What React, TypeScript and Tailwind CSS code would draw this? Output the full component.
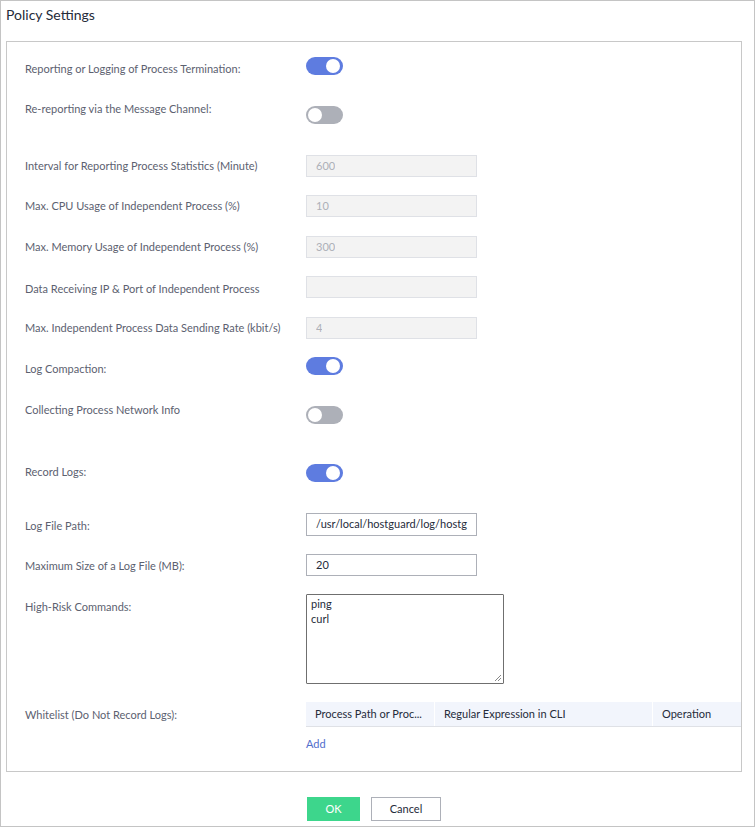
import React from "react";

const font = { fontFamily: "Lato, 'Liberation Sans', sans-serif" };

const Toggle = ({ on, className = "" }: { on: boolean; className?: string }) => (
  <div
    className={`relative h-[18px] w-[37px] rounded-full ${on ? "bg-[#5e7ce0]" : "bg-[#adb0b8]"} ${className}`}
  >
    <div
      className={`absolute top-[2px] h-[14px] w-[14px] rounded-full bg-white ${on ? "right-[3px]" : "left-[2px]"}`}
    />
  </div>
);

const Field = ({ value, disabled }: { value: string; disabled?: boolean }) => (
  <div
    className={`flex h-[22px] w-[171px] items-center border px-[9px] text-[11px] ${
      disabled
        ? "border-[#dfe1e6] bg-[#f3f3f3] text-[#adb0b8]"
        : "border-[#adb0b8] bg-white text-[#252b3a]"
    }`}
  >
    <span className="overflow-hidden whitespace-nowrap">{value}</span>
  </div>
);

const Label = ({ children, className = "" }: { children: React.ReactNode; className?: string }) => (
  <div className={`w-[281px] shrink-0 text-[11px] leading-[16px] text-[#5c6170] ${className}`}>{children}</div>
);

const App = () => {
  return (
    <div className="h-[827px] w-[755px] border border-[#c4c4c4] bg-white" style={font}>
      <div className="flex h-[26px] items-center pl-[5px] text-[14px] text-[#252b3a]">Policy Settings</div>
      <div className="ml-[5px] mt-[14px] w-[736px] border border-[#c8c8c8] pl-[18px] pt-[15px]">
        <div className="flex h-[44px] items-start">
          <Label className="mt-[4px]">Reporting or Logging of Process Termination:</Label>
          <Toggle on />
        </div>
        <div className="flex h-[54px] items-start">
          <Label>Re-reporting via the Message Channel:</Label>
          <Toggle on={false} className="mt-[5px]" />
        </div>
        <div className="flex h-[40px] items-start">
          <Label className="mt-[3px]">Interval for Reporting Process Statistics (Minute)</Label>
          <Field value="600" disabled />
        </div>
        <div className="flex h-[41px] items-start">
          <Label className="mt-[3px]">Max. CPU Usage of Independent Process (%)</Label>
          <Field value="10" disabled />
        </div>
        <div className="flex h-[40px] items-start">
          <Label className="mt-[3px]">Max. Memory Usage of Independent Process (%)</Label>
          <Field value="300" disabled />
        </div>
        <div className="flex h-[41px] items-start">
          <Label className="mt-[5px]">Data Receiving IP &amp; Port of Independent Process</Label>
          <Field value="" disabled />
        </div>
        <div className="flex h-[40px] items-start">
          <Label className="mt-[3px]">Max. Independent Process Data Sending Rate (kbit/s)</Label>
          <Field value="4" disabled />
        </div>
        <div className="flex h-[45px] items-start">
          <Label className="mt-[4px]">Log Compaction:</Label>
          <Toggle on />
        </div>
        <div className="flex h-[62px] items-start">
          <Label>Collecting Process Network Info</Label>
          <Toggle on={false} className="mt-[4px]" />
        </div>
        <div className="flex h-[49px] items-start">
          <Label>Record Logs:</Label>
          <Toggle on />
        </div>
        <div className="flex h-[41px] items-start">
          <Label className="mt-[5px]">Log File Path:</Label>
          <div className="flex h-[23px] w-[171px] items-center whitespace-nowrap border border-[#adb0b8] px-[9px] text-[11px] text-[#252b3a]">
            /usr/local/hostguard/log/hostg
          </div>
        </div>
        <div className="flex h-[40px] items-start">
          <Label className="mt-[4px]">Maximum Size of a Log File (MB):</Label>
          <Field value="20" />
        </div>
        <div className="flex h-[108px] items-start">
          <Label className="mt-[5px]">High-Risk Commands:</Label>
          <div className="relative h-[90px] w-[198px] rounded-[1px] border border-[#6f6f6f] px-[4px] pt-[1px] text-[11px] leading-[15px] text-[#252b3a]">
            <div>ping</div>
            <div>curl</div>
            <svg className="absolute bottom-[1px] right-[1px]" width="8" height="8" viewBox="0 0 8 8">
              <path d="M7 1L1 7M7 4L4 7" stroke="#888" strokeWidth="1" />
            </svg>
          </div>
        </div>
        <div className="flex h-[69px] items-start">
          <Label className="mt-[5px]">Whitelist (Do Not Record Logs):</Label>
          <div className="flex-1">
            <div className="flex h-[25px] border-b border-[#dfe1e6] bg-[#f2f5fc] text-[11px] text-[#252b3a]">
              <div className="flex w-[129px] items-center border-r border-white pl-[9px]">Process Path or Proc...</div>
              <div className="flex w-[218px] items-center border-r border-white pl-[9px]">Regular Expression in CLI</div>
              <div className="flex flex-1 items-center pl-[9px]">Operation</div>
            </div>
            <div className="mt-[9px] text-[11px] leading-[16px] text-[#526ecc]">Add</div>
          </div>
        </div>
      </div>
      <div className="ml-[306px] mt-[25px] flex gap-[11px]">
        <button className="h-[24px] w-[53px] bg-[#3dd68c] text-[11px] text-white">OK</button>
        <button className="h-[24px] w-[70px] border border-[#adb0b8] bg-white text-[11px] text-[#252b3a]">Cancel</button>
      </div>
    </div>
  );
};

export default App;
